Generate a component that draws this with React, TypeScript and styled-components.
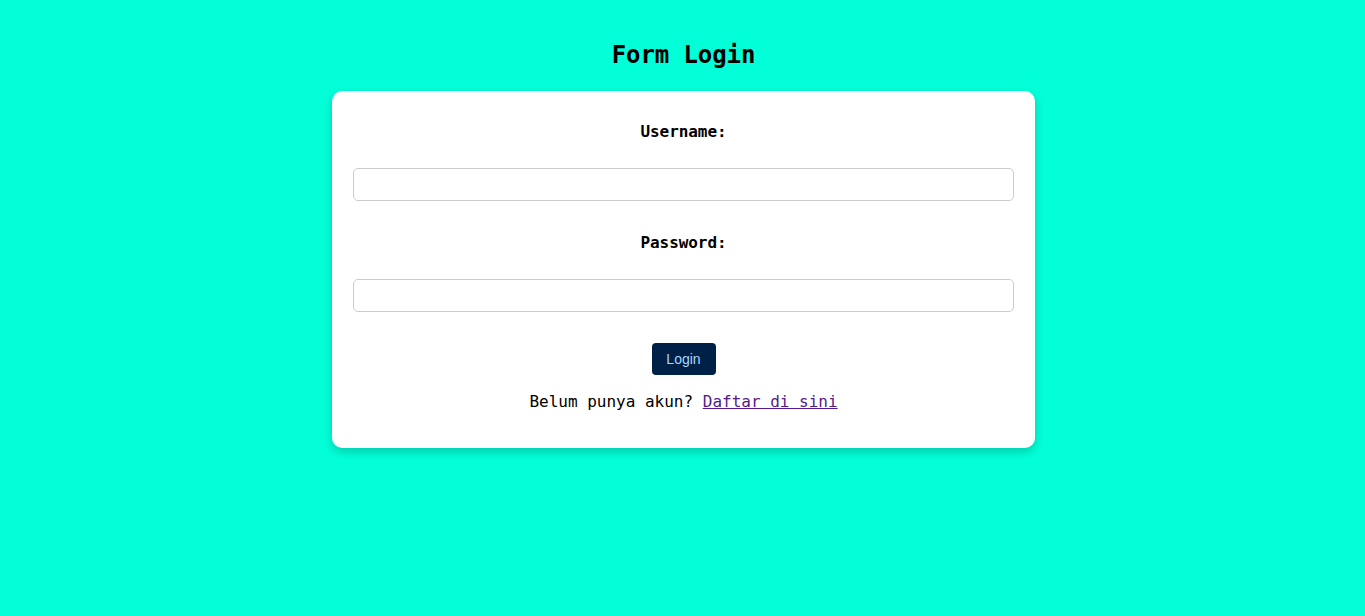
import React from "react";
import styled, { createGlobalStyle } from "styled-components";

const Global = createGlobalStyle`
  html, body { margin: 0; padding: 0; }
  body {
    background: #03ffd8;
    font-family: "DejaVu Sans Mono", "Liberation Mono", monospace;
    color: #000;
    min-height: 616px;
  }
`;

const Page = styled.div`
  display: flex;
  flex-direction: column;
  align-items: center;
  padding-top: 41px;
  padding-left: 2px;
`;

const Title = styled.h2`
  margin: 0 0 22px;
  font-size: 24px;
  line-height: 28px;
  font-weight: bold;
  letter-spacing: -0.1px;
`;

const Card = styled.form`
  box-sizing: border-box;
  width: 703px;
  background: #fff;
  border-radius: 10px;
  box-shadow: 0 4px 10px rgba(0, 0, 0, 0.2);
  padding: 20px 21px;
  display: flex;
  flex-direction: column;
  align-items: stretch;
`;

const Label = styled.label<{ $top: number }>`
  display: block;
  text-align: center;
  font-weight: bold;
  font-size: 16px;
  line-height: 19px;
  letter-spacing: -0.07px;
  margin-top: ${(p) => p.$top}px;
  margin-bottom: 27px;
`;

const Input = styled.input`
  box-sizing: border-box;
  height: 33px;
  width: 100%;
  border: 1px solid #ccc;
  border-radius: 5px;
  padding: 8px;
  font-size: 14px;
  margin: 0;
  outline: none;
`;

const Button = styled.button`
  align-self: center;
  margin-top: 31px;
  width: 64px;
  height: 32px;
  border: none;
  border-radius: 4px;
  background: #002147;
  color: #a9d6ff;
  font-family: "Liberation Sans", Arial, sans-serif;
  font-size: 14px;
  cursor: pointer;
`;

const Note = styled.p`
  margin: 17px 0;
  text-align: center;
  font-size: 16px;
  line-height: 19px;
`;

const Link = styled.a`
  color: #551a8b;
  text-decoration: underline;
`;

export default function App() {
  return (
    <>
      <Global />
      <Page>
        <Title>Form Login</Title>
        <Card onSubmit={(e) => e.preventDefault()}>
          <Label $top={11} htmlFor="username">Username:</Label>
          <Input id="username" type="text" />
          <Label $top={32} htmlFor="password">Password:</Label>
          <Input id="password" type="password" />
          <Button type="submit">Login</Button>
          <Note>
            Belum punya akun? <Link href="#">Daftar di sini</Link>
          </Note>
        </Card>
      </Page>
    </>
  );
}
